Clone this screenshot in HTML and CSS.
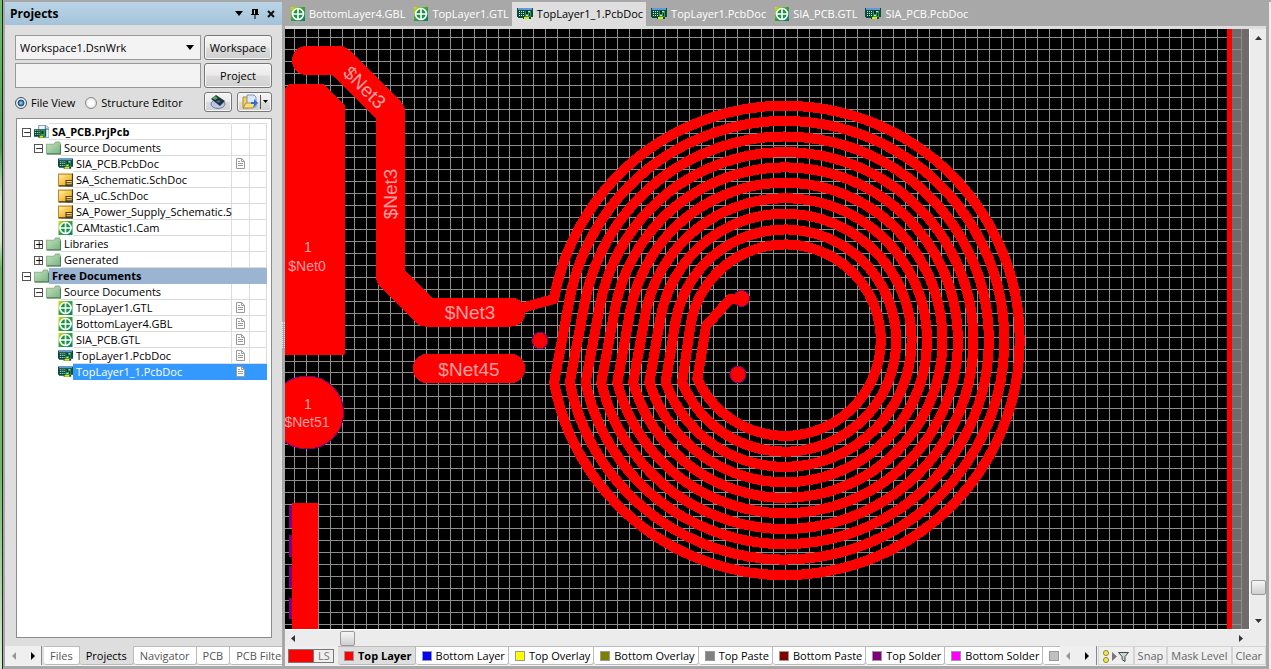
FILE: index.html
```html
<!DOCTYPE html>
<html lang="en">
<head>
    <meta charset="UTF-8">
    <meta name="viewport" content="width=device-width, initial-scale=1.0">
    <title>TopLayer1_1.PcbDoc</title>
    <link rel="stylesheet" href="styles.css">
</head>
<body>
    <!-- Shared icons -->
    <svg class="defs" width="0" height="0" aria-hidden="true">
        <defs>
            <linearGradient id="gerberFill" x1="0" y1="0" x2="1" y2="1">
                <stop offset="0" stop-color="#e0e400"/>
                <stop offset="0.45" stop-color="#35a53c"/>
                <stop offset="1" stop-color="#00806c"/>
            </linearGradient>
            <linearGradient id="folderFill" x1="0" y1="0" x2="1" y2="1">
                <stop offset="0" stop-color="#c4e3bd"/>
                <stop offset="1" stop-color="#78b381"/>
            </linearGradient>
            <linearGradient id="schFill" x1="0" y1="0" x2="1" y2="1">
                <stop offset="0" stop-color="#fff3b0"/>
                <stop offset="0.6" stop-color="#f5bc35"/>
                <stop offset="1" stop-color="#d98a00"/>
            </linearGradient>
            <symbol id="gerber" viewBox="0 0 14 14">
                <rect width="14" height="14" fill="url(#gerberFill)"/>
                <circle cx="7" cy="7" r="5.5" fill="#159343" stroke="#fff" stroke-width="1.6"/>
                <path d="M7 1v12M1 7h12" stroke="#fff" stroke-width="1.6"/>
            </symbol>
            <symbol id="pcb" viewBox="0 0 16 12">
                <path d="M0 0h16v9h-2v2h-8v-1H1V9H0z" fill="#0a4a3c"/>
                <path d="M1 0h14v2H1z" fill="#5f9bd8"/>
                <path d="M2 3h1v1H2zM4 3h1v1H4zM6 3h1v1H6zM2 5h1v1H2zM4 5h1v1H4zM6 5h1v1H6zM2 7h1v1H2zM4 7h1v1H4zM6 7h1v1H6z" fill="#c8f0d0"/>
                <path d="M8 3h6v6H8z" fill="#2d9a5c"/>
                <path d="M9 3h2v3H9zM12 5h1v3h-1z" fill="#08271f"/>
                <path d="M11 3h2v1h-2zM9 7h2v1H9z" fill="#b7e8c0"/>
                <path d="M7 9h5v2H7z" fill="#e9e300"/>
            </symbol>
            <symbol id="project" viewBox="0 0 16 14">
                <path d="M5 0h8l3 3v10H5z" fill="#eef4fc" stroke="#7b93b5"/>
                <path d="M12 0v4h4" fill="#b9cde8" stroke="#5a7296"/>
                <path d="M0 4h13v8h-2v1H5v-1H0z" fill="#0a4a3c"/>
                <path d="M1 5h1v1H1zM3 5h1v1H3zM5 5h1v1H5zM1 7h1v1H1zM3 7h1v1H3zM5 7h1v1H5zM1 9h1v1H1zM3 9h1v1H3zM5 9h1v1H5z" fill="#c8f0d0"/>
                <path d="M7 5h5v6H7z" fill="#2d9a5c"/>
                <path d="M8 6h2v3H8z" fill="#08271f"/>
                <path d="M6 11h4v2H6z" fill="#e9e300"/>
            </symbol>
            <symbol id="sch" viewBox="0 0 14 12">
                <path d="M.5 .5h13v11H.5z" fill="url(#schFill)" stroke="#b98a2c"/>
                <path d="M13.5 0v11.5H1" fill="none" stroke="#4a3a2a"/>
                <path d="M7 6h7v6H7z" fill="#503a20"/>
                <path d="M8 7h5v1H8zM8 9h5v1H8z" fill="#ffd75a"/>
            </symbol>
            <symbol id="folder" viewBox="0 0 14 12">
                <path d="M.5 11.5V2.500h7l1.500-2h3.500l1 2v9z" fill="url(#folderFill)" stroke="#8fb48f"/>
                <path d="M13.5 3v8.500H1" fill="none" stroke="#4f7f5a"/>
            </symbol>
            <symbol id="page" viewBox="0 0 10 11">
                <path d="M.5 .5h5l3 3v7h-8z" fill="#fff" stroke="#9a9a9a"/>
                <path d="M5.500 .5v3h3M2 5.500h5M2 7.500h5M2 3.500h2" fill="none" stroke="#9a9a9a"/>
            </symbol>
        </defs>
    </svg>

    <div class="desktop-edge"></div>

    <aside class="panel">
        <header class="panel-title">
            <h1>Projects</h1>
            <button class="title-btn" aria-label="Panel menu"><svg width="8" height="5"><path d="M0 0h8L4 5z"/></svg></button>
            <button class="title-btn" aria-label="Pin panel"><svg width="8" height="10"><path d="M1 0h6v5h1v1H0V5h1zM3.500 6h1v4h-1z"/><path d="M3 1h1v4H3z" fill="#b8d2e4"/></svg></button>
            <button class="title-btn" aria-label="Close panel"><svg width="8" height="8"><path d="M1 1l6 6M7 1L1 7" stroke="#111" stroke-width="2"/></svg></button>
        </header>

        <div class="panel-body">
            <div class="form-row">
                <div class="combo">
                    <select aria-label="Workspace file"><option>Workspace1.DsnWrk</option></select>
                    <svg width="8" height="5"><path d="M0 0h8L4 5z"/></svg>
                </div>
                <button class="push">Workspace</button>
            </div>
            <div class="form-row">
                <input class="field" type="text" aria-label="Project file">
                <button class="push">Project</button>
            </div>
            <div class="view-row">
                <label><input type="radio" name="view" checked>File View</label>
                <label><input type="radio" name="view">Structure Editor</label>
                <button class="push tool first" aria-label="Compile">
                    <svg width="16" height="14">
                        <ellipse cx="8" cy="9" rx="7" ry="4.500" fill="#b8c8e0" stroke="#6880a8"/>
                        <path d="M1 4l5-4 9 6-5 5z" fill="#20303f"/>
                        <path d="M2 3l3-2 3 2-3 2z" fill="#53a860"/>
                        <path d="M8 5l3 1-2 2-3-1z" fill="#50657c"/>
                    </svg>
                </button>
                <button class="push tool wide" aria-label="Open document">
                    <svg width="26" height="16">
                        <path d="M1 3h5v11H1z" fill="#f3cf62" stroke="#b48b2c"/>
                        <path d="M5 1h7l2 2v10H5z" fill="#dce8fa" stroke="#7c93bd"/>
                        <path d="M1 14l3-5h9l-2 5z" fill="#f9dd83" stroke="#b48b2c"/>
                        <path d="M9 8h3V5l4 4-4 4v-3H9z" fill="#2a70d8"/>
                        <path d="M18 1h1v14h-1z" fill="#555"/>
                        <path d="M21 6h5l-2.500 3z"/>
                    </svg>
                </button>
            </div>

            <div class="tree">
                <table>
                    <tbody>
                        <tr><td><div class="node"><button class="toggle" aria-label="Collapse">−</button><svg class="ico"><use href="#project"/></svg><b class="name">SA_PCB.PrjPcb</b></div></td><td></td><td></td></tr>
                        <tr><td><div class="node level-2"><button class="toggle" aria-label="Collapse">−</button><svg class="ico"><use href="#folder"/></svg><span class="name">Source Documents</span></div></td><td></td><td></td></tr>
                        <tr><td><div class="node level-3"><svg class="ico"><use href="#pcb"/></svg><span class="name">SIA_PCB.PcbDoc</span></div></td><td><svg class="page"><use href="#page"/></svg></td><td></td></tr>
                        <tr><td><div class="node level-3"><svg class="ico"><use href="#sch"/></svg><span class="name">SA_Schematic.SchDoc</span></div></td><td></td><td></td></tr>
                        <tr><td><div class="node level-3"><svg class="ico"><use href="#sch"/></svg><span class="name">SA_uC.SchDoc</span></div></td><td></td><td></td></tr>
                        <tr><td><div class="node level-3"><svg class="ico"><use href="#sch"/></svg><span class="name">SA_Power_Supply_Schematic.S</span></div></td><td></td><td></td></tr>
                        <tr><td><div class="node level-3"><svg class="ico"><use href="#gerber"/></svg><span class="name">CAMtastic1.Cam</span></div></td><td></td><td></td></tr>
                        <tr><td><div class="node level-2"><button class="toggle" aria-label="Expand">+</button><svg class="ico"><use href="#folder"/></svg><span class="name">Libraries</span></div></td><td></td><td></td></tr>
                        <tr><td><div class="node level-2"><button class="toggle" aria-label="Expand">+</button><svg class="ico"><use href="#folder"/></svg><span class="name">Generated</span></div></td><td></td><td></td></tr>
                        <tr class="group"><td><div class="node"><button class="toggle" aria-label="Collapse">−</button><svg class="ico"><use href="#folder"/></svg><b class="name">Free Documents</b></div></td><td></td><td></td></tr>
                        <tr><td><div class="node level-2"><button class="toggle" aria-label="Collapse">−</button><svg class="ico"><use href="#folder"/></svg><span class="name">Source Documents</span></div></td><td></td><td></td></tr>
                        <tr><td><div class="node level-3"><svg class="ico"><use href="#gerber"/></svg><span class="name">TopLayer1.GTL</span></div></td><td><svg class="page"><use href="#page"/></svg></td><td></td></tr>
                        <tr><td><div class="node level-3"><svg class="ico"><use href="#gerber"/></svg><span class="name">BottomLayer4.GBL</span></div></td><td><svg class="page"><use href="#page"/></svg></td><td></td></tr>
                        <tr><td><div class="node level-3"><svg class="ico"><use href="#gerber"/></svg><span class="name">SIA_PCB.GTL</span></div></td><td><svg class="page"><use href="#page"/></svg></td><td></td></tr>
                        <tr><td><div class="node level-3"><svg class="ico"><use href="#pcb"/></svg><span class="name">TopLayer1.PcbDoc</span></div></td><td><svg class="page"><use href="#page"/></svg></td><td></td></tr>
                        <tr class="selected"><td><div class="node level-3"><svg class="ico"><use href="#pcb"/></svg><span class="name">TopLayer1_1.PcbDoc</span></div></td><td><svg class="page"><use href="#page"/></svg></td><td></td></tr>
                    </tbody>
                </table>
            </div>
        </div>

        <nav class="panel-tabs">
            <div class="arrows">
                <button aria-label="Previous tabs"><svg width="5" height="8"><path d="M4 0v8L0 4z" fill="#999"/></svg></button>
                <button aria-label="Next tabs"><svg width="5" height="8"><path d="M1 0v8l4-4z"/></svg></button>
            </div>
            <button class="ptab">Files</button>
            <button class="ptab active">Projects</button>
            <button class="ptab">Navigator</button>
            <button class="ptab">PCB</button>
            <button class="ptab">PCB Filter</button>
        </nav>
    </aside>

    <div class="splitter"><i></i></div>

    <main class="editor">
        <nav class="doc-tabs">
            <button class="dtab"><svg class="sq"><use href="#gerber"/></svg>BottomLayer4.GBL</button>
            <button class="dtab"><svg class="sq"><use href="#gerber"/></svg>TopLayer1.GTL</button>
            <button class="dtab active"><svg class="board-ico"><use href="#pcb"/></svg>TopLayer1_1.PcbDoc</button>
            <button class="dtab"><svg class="board-ico"><use href="#pcb"/></svg>TopLayer1.PcbDoc</button>
            <button class="dtab"><svg class="sq"><use href="#gerber"/></svg>SIA_PCB.GTL</button>
            <button class="dtab"><svg class="board-ico"><use href="#pcb"/></svg>SIA_PCB.PcbDoc</button>
        </nav>

        <div class="workspace">
            <svg class="board">
                <defs>
                    <pattern id="gridA" x="294" y="37" width="12" height="12" patternUnits="userSpaceOnUse"><path d="M0 0h12v1H1v11H0z"/></pattern>
                    <pattern id="gridB" x="509" y="37" width="12" height="12" patternUnits="userSpaceOnUse"><path d="M0 0h12v1H1v11H0z"/></pattern>
                    <pattern id="gridC" x="294" y="372" width="12" height="12" patternUnits="userSpaceOnUse"><path d="M0 0h12v1H1v11H0z"/></pattern>
                    <pattern id="gridD" x="509" y="372" width="12" height="12" patternUnits="userSpaceOnUse"><path d="M0 0h12v1H1v11H0z"/></pattern>
                </defs>
                <g transform="translate(-285 -29)">
                    <!-- sheet beyond the board edge, then the grid -->
                    <rect x="1232" y="29" width="400" height="1200" fill="#706a6a"/>
                    <rect x="285" y="29" width="224" height="343" fill="url(#gridA)"/>
                    <rect x="509" y="29" width="733" height="343" fill="url(#gridB)"/>
                    <rect x="285" y="372" width="224" height="900" fill="url(#gridC)"/>
                    <rect x="509" y="372" width="733" height="900" fill="url(#gridD)"/>
                    <rect class="copper" x="1227" y="29" width="5" height="1200"/>

                    <!-- pads -->
                    <path class="copper" d="M285 88l4-4h35l21 22v247l-2 2h-58z"/>
                    <path class="mask" d="M289 505h4v23h-4zM289 535h4v22h-4zM289 566h4v22h-4zM289 598h4v21h-4z"/>
                    <rect class="copper" x="292" y="503" width="26" height="130"/>
                    <circle class="pad" cx="307" cy="412.5" r="36.5"/>
                    <rect class="copper" x="413" y="354" width="112" height="29" rx="14"/>

                    <!-- wide trace -->
                    <path class="trace wide-trace" d="M306.500 60.500H339L390.500 112V276.500L425.500 312H511"/>

                    <!-- coil -->
                    <path class="trace coil" d="M518 309L554 299
                        A234.700 234.700 0 1 1 554.100 382.400L569.400 300.200
                        A219.300 219.300 0 1 1 569.800 382.400L584.700 302.800
                        A203.800 203.800 0 1 1 585.600 382.400L599.800 306
                        A188.400 188.400 0 1 1 601.300 382.400L615 308.800
                        A172.900 172.900 0 1 1 617.300 382.400L630 312.200
                        A157.500 157.500 0 1 1 633.200 382.400L645.200 315.400
                        A142 142 0 1 1 649.400 382.400L660.200 319
                        A126.600 126.600 0 1 1 665.600 382.400L675.400 322.500
                        A111.100 111.100 0 1 1 682.100 382.400L690.300 326.600
                        A95.700 95.700 0 1 1 697.400 378.600L706 326L730 299H741"/>

                    <!-- vias -->
                    <circle class="pad" cx="540" cy="340.500" r="8"/>
                    <circle class="pad" cx="741.500" cy="298.500" r="8"/>
                    <circle class="pad" cx="738" cy="374.500" r="8"/>
                    <path class="copper" d="M728 294h11v10h-11z"/>

                    <g class="net">
                        <text x="470" y="319">$Net3</text>
                        <text x="469" y="376">$Net45</text>
                        <text transform="translate(360 92) rotate(45)">$Net3</text>
                        <text transform="translate(397 194) rotate(-90)">$Net3</text>
                    </g>
                    <g class="net small">
                        <text x="308" y="252">1</text>
                        <text x="307" y="271">$Net0</text>
                        <text x="308" y="409">1</text>
                        <text x="307" y="427">$Net51</text>
                    </g>
                </g>
            </svg>

            <div class="scroll vertical">
                <svg width="7" height="4"><path d="M3.500 0L7 4H0z"/></svg>
                <span class="thumb"></span>
                <svg width="7" height="4"><path d="M0 0h7L3.500 4z"/></svg>
            </div>
            <div class="scroll horizontal">
                <svg width="4" height="7"><path d="M4 0v7L0 3.500z"/></svg>
                <span class="thumb"></span>
                <svg width="4" height="7"><path d="M0 0v7l4-3.500z"/></svg>
            </div>
            <div class="corner"></div>
        </div>

        <footer class="layer-bar">
            <button class="layer-set"><i></i>LS</button>
            <div class="layers">
                <button class="ltab active"><i class="red"></i>Top Layer</button>
                <button class="ltab"><i class="blue"></i>Bottom Layer</button>
                <button class="ltab"><i class="yellow"></i>Top Overlay</button>
                <button class="ltab"><i class="olive"></i>Bottom Overlay</button>
                <button class="ltab"><i class="gray"></i>Top Paste</button>
                <button class="ltab"><i class="maroon"></i>Bottom Paste</button>
                <button class="ltab"><i class="purple"></i>Top Solder</button>
                <button class="ltab"><i class="magenta"></i>Bottom Solder</button>
                <button class="ltab" aria-label="More layers"><i class="silver"></i></button>
            </div>
            <div class="arrows">
                <button aria-label="Previous layers"><svg width="5" height="8"><path d="M4 0v8L0 4z" fill="#999"/></svg></button>
                <button aria-label="Next layers"><svg width="5" height="8"><path d="M1 0v8l4-4z"/></svg></button>
            </div>
            <button class="tbtn" aria-label="Filter">
                <svg width="28" height="14">
                    <circle cx="4" cy="4" r="2.500" fill="#f6ee56" stroke="#8a8430"/>
                    <circle cx="4" cy="11" r="2.500" fill="#f6ee56" stroke="#8a8430"/>
                    <path d="M10 3l5 4.500-5 4.500z" fill="#777"/>
                    <path d="M16.500 3.500h10L23 7.500v5l-3-2v-3z" fill="#c2dccf" stroke="#444"/>
                </svg>
            </button>
            <button class="tbtn">Snap</button>
            <button class="tbtn">Mask Level</button>
            <button class="tbtn">Clear</button>
        </footer>
    </main>

    <div class="window-edge"></div>
</body>
</html>
```

FILE: styles.css
```css
* {
    box-sizing: border-box;
}
body {
    margin: 0;
    height: 100vh;
    display: flex;
    overflow: hidden;
    background: #a8a8a8;
    color: #000;
    font: 11px/16px "Open Sans", "Noto Sans", sans-serif;
}
button, input, select {
    font: inherit;
    color: inherit;
    margin: 0;
    padding: 0;
    border: 0;
    border-radius: 0;
    background: none;
    white-space: nowrap;
}
svg {
    display: block;
    flex: none;
}
.defs {
    position: absolute;
}
.desktop-edge {
    flex: none;
    width: 3px;
    margin-right: 2px;
    background: linear-gradient(#6fc06a, #4f9f52 22%, #d6ecd0 30%, #cfe8c8 36%, #6fb868 40%, #6fb868 70%, #d6ecd0);
    border-right: 1px solid #222;
}

/* Projects panel */
.panel {
    flex: none;
    width: 277px;
    padding-top: 2px;
    margin-bottom: 3px;
    display: flex;
    flex-direction: column;
    min-width: 0;
}
.panel-title {
    height: 23px;
    padding: 0 7px 0 5px;
    display: flex;
    align-items: center;
    gap: 8px;
    background: linear-gradient(#bbd5e7, #a4c3d9);
}
.panel-title h1 {
    flex: 1;
    margin: 0;
    font-size: 12px;
    line-height: 16px;
}
.title-btn {
    width: 8px;
}
.panel-body {
    flex: 1;
    min-height: 0;
    padding: 10px 10px 8px;
    display: flex;
    flex-direction: column;
    background: #dedede;
}
.form-row {
    display: flex;
    gap: 3px;
    margin-bottom: 3px;
    height: 25px;
}
.combo {
    flex: 1;
    display: grid;
    align-items: center;
}
.combo select, .combo svg {
    grid-area: 1 / 1;
}
.combo svg {
    justify-self: end;
    margin-right: 7px;
    pointer-events: none;
}
.combo select, .field {
    appearance: none;
    width: 100%;
    min-width: 0;
    height: 25px;
    padding: 0 4px;
    border: 1px solid #999;
    background: #f3f3f3;
}
.field {
    flex: 1;
}
.push {
    flex: none;
    width: 68px;
    border: 1px solid #777;
    border-radius: 3px;
    background: linear-gradient(#f4f4f4, #ebebeb 48%, #dcdcdc 52%, #d0d0d0);
    box-shadow: inset 0 0 0 1px #f8f8f8;
    text-align: center;
}
.view-row {
    display: flex;
    align-items: center;
    height: 22px;
    margin-bottom: 5px;
}
.view-row label {
    display: flex;
    align-items: center;
    gap: 4px;
    margin-right: 10px;
    padding-top: 1px;
    white-space: nowrap;
}
.view-row input {
    appearance: none;
    width: 12px;
    height: 12px;
    border: 1px solid #888;
    border-radius: 50%;
    background: radial-gradient(#fff 30%, #d4d4d4);
}
.view-row input:checked {
    border-color: #456;
    background: radial-gradient(#7fc8f4 8%, #153a63 45%, #e4eaf0 52%);
}
.tool {
    display: flex;
    align-items: center;
    justify-content: center;
    width: 28px;
    height: 20px;
}
.tool.first {
    margin-left: auto;
}
.tool.wide {
    width: 35px;
    margin-left: 5px;
}
.view-row label + .tool {
    margin-left: auto;
}
.tree {
    flex: 1;
    min-height: 0;
    margin-left: 1px;
    padding: 5px 4px 0 5px;
    border: 1px solid #8c8c8c;
    background: #fff;
    overflow: hidden;
}
.tree table {
    width: 100%;
    table-layout: fixed;
    border-spacing: 0;
}
.tree td {
    height: 16px;
    padding: 0;
    border-right: 1px solid #dcdcdc;
}
.tree td + td {
    width: 18px;
    border-bottom: 1px solid #dcdcdc;
}
.tree td + td + td {
    width: 17px;
}
.tree tr:first-child .name, .tree tr:first-child td + td {
    box-shadow: 0 -1px #dcdcdc;
}
.node {
    display: flex;
    align-items: center;
    height: 16px;
}
.level-2 {
    padding-left: 12px;
}
.level-3 {
    padding-left: 33px;
}
.toggle {
    flex: none;
    width: 9px;
    height: 9px;
    border: 1px solid #555;
    background: #fff;
    font: 10px/7px "DejaVu Sans", sans-serif;
    text-align: center;
    overflow: hidden;
}
.ico {
    width: 15px;
    height: 14px;
    margin-left: 3px;
}
.name {
    flex: 1;
    min-width: 0;
    height: 16px;
    padding-left: 3px;
    border-bottom: 1px solid #dcdcdc;
    white-space: nowrap;
}
.page {
    width: 10px;
    height: 11px;
    margin-left: 4px;
}
.group .name, .group td + td {
    background: #9ab4d2;
    border-color: #9ab4d2;
}
.group td {
    border-right-color: #9ab4d2;
}
.selected .name, .selected td + td {
    background: #3399ff;
    border-color: #3399ff;
    color: #fff;
}
.selected td {
    border-right-color: #3399ff;
}
.panel-tabs {
    display: flex;
    height: 20px;
    overflow: hidden;
    background: #dedede;
    border-bottom: 1px solid #f4f4f4;
}
.arrows {
    flex: none;
    display: flex;
    width: 37px;
    margin-right: 1px;
    background: #efefef;
    border-right: 1px solid #888;
}
.arrows button {
    flex: 1;
    display: grid;
    place-items: center;
}
.panel-tabs .arrows {
    margin-right: 2px;
}
.ptab {
    flex: none;
    padding: 0 6px;
    border: 1px solid #bbb;
    border-left: 0;
    border-radius: 0 0 3px 3px;
    background: #fff;
    color: #555;
}
.ptab.active {
    background: #dedede;
    border-top-color: #dedede;
    color: #000;
}
.splitter {
    flex: none;
    width: 3px;
    display: flex;
    align-items: center;
}
.splitter i {
    width: 3px;
    height: 26px;
    border-left: 1px dotted #eee;
    border-right: 1px dotted #eee;
}

/* Editor */
.editor {
    flex: 1;
    min-width: 0;
    display: flex;
    flex-direction: column;
    margin-bottom: 3px;
}
.doc-tabs {
    flex: none;
    display: flex;
    height: 29px;
    padding-top: 2px;
    border-bottom: 3px solid #dedede;
}
.dtab {
    display: flex;
    align-items: center;
    gap: 4px;
    padding: 0 3px 0 5px;
    color: #fff;
}
.dtab.active {
    background: #dedede;
    color: #000;
}
.sq {
    width: 14px;
    height: 14px;
    margin-left: 1px;
}
.board-ico {
    width: 16px;
    height: 12px;
}
.workspace {
    flex: 1;
    min-height: 0;
    display: grid;
    grid-template: minmax(0, 1fr) 17px / minmax(0, 1fr) 17px;
}
.board {
    width: 100%;
    height: 100%;
    background: #000;
    shape-rendering: crispEdges;
}
.board pattern path {
    fill: #8f8c8c;
}
.copper {
    fill: #f00;
}
.mask {
    fill: #800080;
}
.pad {
    fill: #f00;
    stroke: #800080;
    stroke-width: 1;
}
.trace {
    fill: none;
    stroke: #f00;
    stroke-linecap: round;
    stroke-linejoin: round;
}
.wide-trace {
    stroke-width: 29px;
}
.coil {
    stroke-width: 10px;
}
.net {
    fill: #ffa0a0;
    font: 19px "Liberation Sans", Arial, sans-serif;
    text-anchor: middle;
}
.net.small {
    font-size: 14px;
}
.scroll {
    display: flex;
    align-items: center;
    justify-content: space-between;
    background: #ececec;
}
.scroll svg {
    fill: #333;
}
.scroll .thumb {
    width: 15px;
    height: 15px;
    border: 1px solid #999;
    border-radius: 2px;
    background: linear-gradient(#f6f6f6, #cfcfcf);
}
.vertical {
    flex-direction: column;
    padding: 7px 0 6px;
    border-left: 1px solid #fff;
}
.vertical .thumb {
    margin-top: auto;
    margin-bottom: 24px;
}
.horizontal {
    padding: 0 6px;
    border-top: 1px solid #fff;
}
.horizontal .thumb {
    margin-left: 45px;
    margin-right: auto;
}
.corner {
    background: #ececec;
}
.layer-bar {
    flex: none;
    display: flex;
    height: 20px;
    background: #efefef;
    border-bottom: 1px solid #f4f4f4;
}
.layer-set {
    flex: none;
    display: flex;
    align-items: center;
    width: 46px;
    height: 14px;
    margin: 3px 4px 0 3px;
    border: 1px solid #777;
    color: #777;
}
.layer-set i {
    width: 25px;
    height: 12px;
    margin-right: 4px;
    background: #f00;
    border-right: 1px solid #777;
}
.layers {
    flex: 1;
    min-width: 0;
    display: flex;
    overflow: hidden;
}
.ltab {
    flex: none;
    display: flex;
    align-items: center;
    gap: 4px;
    padding: 0 3px 0 6px;
    border: 1px solid #bbb;
    border-left: 0;
    border-radius: 0 0 3px 3px;
    background: #fff;
}
.ltab.active {
    background: #dedede;
    font-weight: bold;
}
.ltab i {
    width: 10px;
    height: 10px;
    border: 1px solid #999;
}
.red { background: #f00; }
.blue { background: #00f; }
.yellow { background: #ff0; }
.olive { background: #808000; }
.gray { background: #808080; }
.maroon { background: #800000; }
.purple { background: #800080; }
.magenta { background: #f0f; }
.silver { background: #c0c0c0; }
.tbtn {
    flex: none;
    padding: 0 3px;
    border: 1px solid #d4d4d4;
    color: #666;
}
.window-edge {
    flex: none;
    width: 2px;
    margin: 2px 0 0 3px;
    background: #eee;
}
```
